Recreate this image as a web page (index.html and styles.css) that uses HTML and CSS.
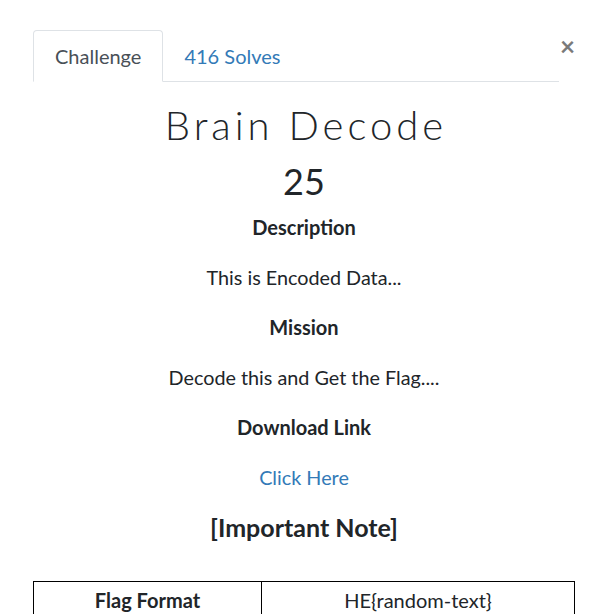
FILE: index.html
```html
<!DOCTYPE html>
<html>
<head>
<meta charset="utf-8">
<link rel="stylesheet" href="styles.css">
</head>
<body>
<div class="modal">
  <div class="top-row">
    <ul class="tabs">
      <li class="tab active">Challenge</li>
      <li class="tab link">416 Solves</li>
    </ul>
    <span class="close">×</span>
  </div>
  <div class="content">
    <h2 class="title">Brain Decode</h2>
    <h3 class="value">25</h3>
    <p class="head">Description</p>
    <p class="text">This is Encoded Data...</p>
    <p class="head">Mission</p>
    <p class="text">Decode this and Get the Flag....</p>
    <p class="head">Download Link</p>
    <p class="text"><a class="dl" href="#">Click Here</a></p>
    <p class="note">[Important Note]</p>
    <table class="flag">
      <tr>
        <td class="label">Flag Format</td>
        <td class="val">HE{random-text}</td>
      </tr>
    </table>
  </div>
</div>
</body>
</html>
```
FILE: styles.css
```css
html, body {
  margin: 0;
  padding: 0;
  background: #fff;
}
body {
  font-family: Lato, "Liberation Sans", sans-serif;
  color: #212529;
}
.modal {
  padding: 30px 34px 0 33px;
  width: 542px;
}
.top-row {
  display: flex;
  align-items: flex-start;
}
.tabs {
  list-style: none;
  margin: 0;
  padding: 0;
  display: flex;
  flex: 1;
  border-bottom: 1px solid #dee2e6;
  height: 51px;
}
.tab {
  font-size: 20px;
  padding: 0 21px;
  line-height: 50px;
  height: 52px;
  box-sizing: border-box;
  border: 1px solid transparent;
  border-radius: 4px 4px 0 0;
}
.tab.active {
  color: #495057;
  border-color: #dee2e6 #dee2e6 #fff;
  background: #fff;
}
.tab.link {
  color: #337ab7;
  padding-left: 20px;
}
.close {
  width: 16px;
  text-align: right;
  font-size: 26px;
  font-weight: 700;
  line-height: 1;
  color: #7a7a7a;
  margin-top: 3px;
}
.content {
  text-align: center;
}
.title {
  font-weight: 300;
  font-size: 40px;
  letter-spacing: 4px;
  padding-left: 4px;
  line-height: 48px;
  margin: 19px 0 0;
}
.value {
  font-weight: 400;
  font-size: 36px;
  line-height: 44px;
  margin: 10px 0 11px;
}
.head {
  font-weight: 700;
  font-size: 20px;
  line-height: 26px;
  margin: 0 0 24px;
}
.text {
  font-size: 19.8px;
  line-height: 26px;
  margin: 0 0 24px;
}
.dl {
  color: #337ab7;
  text-decoration: none;
}
.note {
  font-weight: 700;
  font-size: 25px;
  line-height: 26px;
  margin: 0 0 41px;
}
.flag {
  width: 542px;
  border-collapse: collapse;
}
.flag td {
  border: 1px solid #000;
  font-size: 20px;
  line-height: 24px;
  padding: 6px;
  text-align: center;
}
.flag .label {
  font-weight: 700;
  width: 215px;
}
```
